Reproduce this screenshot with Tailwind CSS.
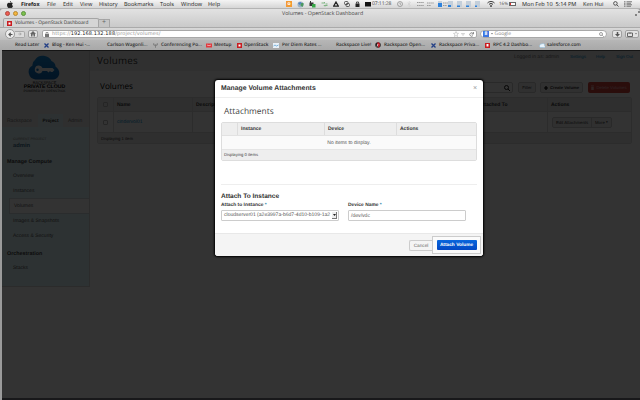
<!DOCTYPE html>
<html lang="en">
<head>
    <meta charset="UTF-8">
    <meta name="viewport" content="width=device-width, initial-scale=1.0">
    <title>Volumes - OpenStack Dashboard</title>
    <script src="https://cdn.jsdelivr.net/npm/@tailwindcss/browser@4"></script>
</head>
<body class="w-[640px] h-[400px] overflow-hidden bg-[#9b9b9b] font-['Liberation_Sans',sans-serif] whitespace-nowrap [text-rendering:geometricPrecision]">

    <!-- Menu bar -->
    <div class="h-[9px] flex items-center bg-linear-to-b from-[#f4f4f4] to-[#d6d6d6] border-b border-[#b4b4b4] text-[5.6px] leading-[8px] text-[#222] font-['Open_Sans',sans-serif]">
        <svg class="w-[6px] h-[7px] ml-[7px] mr-[8px] shrink-0" viewBox="0 0 12 14"><path fill="#222" d="M8 0c0 2-1 3-2.500 3C5.500 1.500 6.500.5 8 0zM6 4c1 0 2-.8 3-.8s2 .5 2.600 1.300C9.500 6 9.800 9 12 10c-.7 2-2 4-3.200 4S7 13.400 6 13.400 4.500 14 3.500 14C1.800 14 0 10.500 0 8s1.500-4.700 3.400-4.700C4.500 3.300 5.300 4 6 4z"/></svg>
        <span class="w-[26px] text-[5.300px] font-bold">Firefox</span>
        <span class="w-4">File</span>
        <span class="w-[17px]">Edit</span>
        <span class="w-[19px]">View</span>
        <span class="w-[25px]">History</span>
        <span class="w-9">Bookmarks</span>
        <span class="w-[21px]">Tools</span>
        <span class="w-[27px]">Window</span>
        <span class="w-[78px]">Help</span>
        <div class="flex items-center w-[86px] gap-[5px]">
            <span class="size-[6px] bg-[#f39a32] text-white text-[5px] leading-[6px] text-center font-bold">o</span>
            <svg class="size-[7px]" viewBox="0 0 14 14"><circle cx="7" cy="7" r="6" fill="#9bb2c4"/><path fill="#4c9960" d="M7 4h6v4l-2 4-4-3z"/><path fill="#4e82c4" d="M2 4l5-2 2 2-4 4z"/></svg>
            <svg class="size-[7px]" viewBox="0 0 14 14"><path fill="#333" d="M1 3h8v7H1z"/><path fill="#36a646" d="M6 6h7v7H6z"/><path fill="#333" d="M2 0h2v4H2z"/></svg>
            <svg class="size-[7px]" viewBox="0 0 14 14" fill="none" stroke="#7fb583" stroke-width="2"><path d="M1 4h7l-2-2M13 9H6l2 2M9 6h4"/></svg>
            <svg class="size-[6px]" viewBox="0 0 12 12" fill="none" stroke="#222" stroke-width="2.500"><path d="M6 2l4.500 8h-9z"/></svg>
            <svg class="size-[6px]" viewBox="0 0 12 12" fill="none" stroke="#333" stroke-width="1.500"><rect x="1" y="1" width="7" height="6" rx="2"/><rect x="4" y="5" width="7" height="6" rx="2"/></svg>
            <svg class="w-[5px] h-[6px]" viewBox="0 0 10 12"><path fill="#222" d="M1 5h8v7H1z"/><path d="M3 5V2h4v3" fill="none" stroke="#222" stroke-width="1.500"/></svg>
            <span class="w-[6px] h-[5px] bg-[#111] border-b border-[#777] shrink-0"></span>
        </div>
        <span class="w-[25px] text-[5.100px] tracking-[-0.100px] text-[#444]">07:11:28</span>
        <svg class="size-[6px] shrink-0" viewBox="0 0 12 12" fill="none" stroke="#777" stroke-width="1.200"><circle cx="6" cy="6" r="5"/><path d="M6 3v3l2 1"/></svg>
        <svg class="w-[4px] h-[6px] ml-1 shrink-0" viewBox="0 0 8 12" fill="none" stroke="#ccc" stroke-width="1"><path d="M1 3l6 6-3 2V1l3 2-6 6"/></svg>
        <!-- Load meters -->
        <svg class="w-[68px] h-[8px] ml-[6px] shrink-0" viewBox="0 0 68 8">
            <path d="M0 2.500h7M0 5.500h7M10 3h7M10 5.500h4M26 3h6M26 5.500h4" stroke="#999" stroke-width="1" stroke-dasharray="1.500 .6"/>
            <path fill="#c4cfda" d="M21 1h4v6h-4zM31 1h5v6h-5zM40 1h5v6h-5zM49 1h5v6h-5zM58 1h5v6h-5z"/>
            <path fill="#2d82dc" d="M21 3h4v4h-4zM31 5h3v2h-3zM40 5.500h3V7h-3zM49 5.500h3V7h-3zM58 5.500h2V7h-2z"/>
        </svg>
        <svg class="w-[8px] h-[6px] ml-[2px] shrink-0" viewBox="0 0 16 12" fill="none" stroke="#333" stroke-width="2"><path d="M1 4c4-4 10-4 14 0M4 7c2-2.500 6-2.500 8 0"/><circle cx="8" cy="10" r="1" fill="#333"/></svg>
        <span class="ml-[4px] w-[10px] text-[4.500px] text-[#555]">16%</span>
        <span class="w-[7px] h-[4px] border border-[#666] bg-white"><i class="block w-[1px] h-[2px] bg-[#d33]"></i></span>
        <span class="ml-[6px] w-[61px]">Mon Feb 10&nbsp; 5:14 PM</span>
        <span class="w-[30px]">Ken Hui</span>
        <svg class="size-[6px]" viewBox="0 0 12 12" fill="none" stroke="#333" stroke-width="1.600"><circle cx="4.800" cy="4.800" r="3.600"/><path d="M7.500 7.500L11 11"/></svg>
        <svg class="w-[8px] h-[6px] ml-[5px]" viewBox="0 0 16 12" stroke="#555" stroke-width="1.500"><path d="M0 1.500h3M5 1.500h11M0 4.500h3M5 4.500h9M0 7.500h3M5 7.500h11M0 10.500h3M5 10.500h9"/></svg>
    </div>

    <!-- Browser chrome -->
    <div class="relative h-[41px] bg-linear-to-b from-[#e2e2e2] to-[#ababab] rounded-t-[3px] font-['Open_Sans',sans-serif] text-[#333]">
        <div class="h-[8px] flex items-center pl-[5px] gap-[3px]">
            <span class="size-[5px] rounded-full bg-[#ee5b50] border-[0.5px] border-[#b04a42]"></span>
            <span class="size-[5px] rounded-full bg-[#f3b53c] border-[0.5px] border-[#b88a35]"></span>
            <span class="size-[5px] rounded-full bg-[#7cc04c] border-[0.5px] border-[#5c9340]"></span>
            <span class="ml-[253px] text-[5.300px] leading-[8px] text-[#444]">Volumes - OpenStack Dashboard</span>
            <svg class="size-[5px] ml-auto" viewBox="0 0 10 10" fill="none" stroke="#666" stroke-width="1.500"><path d="M6 1h3v3M9 1L6 4M4 9H1V6M1 9l3-3"/></svg>
        </div>
        <div class="h-[10px] flex items-end">
            <div class="ml-[3px] w-[96px] h-[9px] flex items-center rounded-t-[2px] bg-[#d5d5d5] border-x border-t border-[#a5a5a5]">
                <svg class="size-[5px] ml-[3px]" viewBox="0 0 10 10"><path fill="#c91c20" d="M0 0h10v10H0z"/><path fill="#fff" d="M3 3h4v4H3z"/></svg>
                <span class="ml-[3px] text-[4.800px] leading-[7px]">Volumes - OpenStack Dashboard</span>
            </div>
            <span class="w-[11px] h-[8px] border border-l-0 border-b-0 border-[#a5a5a5] bg-[#c6c6c6] text-center text-[7px] leading-[6px] text-[#666]">+</span>
        </div>
        <div class="h-[13px] flex items-center bg-linear-to-b from-[#d8d8d8] to-[#bdbdbd] border-t border-[#aaa]">
            <span class="ml-[5px] size-[10px] rounded-full bg-[#eee] border border-[#9a9a9a] flex items-center justify-center"><svg class="size-[5px]" viewBox="0 0 10 10"><path d="M9 5H3M5.500 1.500L2 5l3.500 3.500" stroke="#555" stroke-width="2.400" fill="none"/></svg></span>
            <span class="w-[10px] h-[7px] rounded-r-[2px] bg-[#dcdcdc] border border-l-0 border-[#a9a9a9] flex items-center justify-center"><svg class="size-[4px]" viewBox="0 0 10 10"><path d="M1 5h6M5 1.500L8 5 5 8.500" stroke="#999" stroke-width="2" fill="none"/></svg></span>
            <span class="ml-[3px] w-[10px] h-[8px] rounded-[2px] bg-[#e2e2e2] border border-[#a0a0a0] flex items-center justify-center"><svg class="size-[6px]" viewBox="0 0 12 12"><path fill="#666" d="M6 0l6 6h-2v5H7V7H5v4H2V6H0z"/></svg></span>
            <div class="ml-[4px] w-[435px] h-[8px] rounded-[2px] bg-white border border-[#a8a8a8] flex items-center text-[5px] leading-[7px] font-['DejaVu_Sans',sans-serif]">
                <svg class="ml-[2px] w-[4px] h-[5px]" viewBox="0 0 8 10"><path fill="#777" d="M0 4h8v6H0z"/><path d="M2 4V1h4v3" fill="none" stroke="#777" stroke-width="1.400"/></svg>
                <span class="ml-[3px] mt-[1px] tracking-[0.100px] text-[#999]">https://<b class="font-normal text-[#222]">192.168.132.188</b>/project/volumes/</span>
                <span class="ml-auto mr-[2px] flex items-center gap-[2px]">
                    <svg class="size-[6px]" viewBox="0 0 12 12" fill="none" stroke="#aaa"><path d="M6 1l1.500 3.500 3.500.3-2.700 2.400.8 3.800L6 9l-3.100 2 .8-3.800L1 4.800l3.500-.3z"/></svg>
                    <svg class="w-[4px] h-[3px]" viewBox="0 0 8 6"><path fill="none" stroke="#aaa" d="M1 1h6L4 5z"/></svg>
                    <svg class="size-[5px] ml-[2px]" viewBox="0 0 10 10" fill="none" stroke="#777" stroke-width="1.600"><path d="M8 7a3.500 3.500 0 1 1 0-4M9 0v4H5"/></svg>
                </span>
            </div>
            <div class="ml-[3px] w-[127px] h-[8px] rounded-[4px] bg-white border border-[#a8a8a8] flex items-center">
                <span class="ml-[2px] size-[6px] bg-[#3d76e0] text-white text-[5px] leading-[6px] text-center font-bold">8</span>
                <svg class="ml-[1.500px] w-[2px] h-[2px]" viewBox="0 0 4 4"><path fill="#777" d="M0 0h4L2 3z"/></svg>
                <span class="ml-[2px] mt-[1px] text-[5px] leading-[7px] text-[#888]">Google</span>
                <svg class="ml-auto mr-[2px] size-[5px]" viewBox="0 0 10 10" fill="none" stroke="#777" stroke-width="1.400"><circle cx="4" cy="4" r="3"/><path d="M6.500 6.500L9.500 9.500"/></svg>
            </div>
            <span class="ml-[5px] w-[10px] h-[8px] rounded-[2px] bg-[#e2e2e2] border border-[#a0a0a0] flex items-center justify-center"><svg class="size-[5px]" viewBox="0 0 10 10"><path fill="#555" d="M3.500 0h3v4H10L5 9.500 0 4h3.500z"/></svg></span>
            <span class="ml-[3px] w-[14px] h-[8px] rounded-[2px] bg-[#e2e2e2] border border-[#a0a0a0] flex items-center justify-center gap-[2px]"><svg class="w-[6px] h-[5px]" viewBox="0 0 12 10"><path fill="none" stroke="#666" stroke-width="2" d="M1 2h10v7H1zM6 1v3"/></svg><svg class="w-[2px] h-[2px]" viewBox="0 0 4 4"><path fill="#777" d="M0 0h4L2 3z"/></svg></span>
        </div>
        <!-- Bookmarks -->
        <div class="h-[10px] flex items-center bg-linear-to-b from-[#b6b6b6] to-[#a8a8a8] text-[4.700px] font-semibold leading-[8px] text-[#2c2c2c]">
            <span class="ml-[15px] w-[29px]">Read Later</span>
            <svg class="size-[5px]" viewBox="0 0 10 10"><path d="M1 1l8 8M9 1L1 9" stroke="#233f86" stroke-width="2.600"/></svg>
            <span class="ml-[3px] w-[49px]">Blog - Ken Hui -...</span>
            <span class="ml-[6px] w-[46px]">Carlson Wagonli...</span>
            <svg class="size-[5px]" viewBox="0 0 10 10" fill="none" stroke="#666"><path d="M1 1l4 3 4-3v3L5 6 1 4zM5 3v7"/></svg>
            <span class="ml-[3px] w-[45px]">Conferencing Po...</span>
            <svg class="w-[6px] h-[5px]" viewBox="0 0 12 10"><path fill="#e0393e" d="M0 1h12v8H0z"/><path d="M2 5l2-1 2 2 2-2 2 1" stroke="#fff" fill="none"/></svg>
            <span class="ml-[2px] w-[23px]">Meetup</span>
            <svg class="size-[5px]" viewBox="0 0 10 10"><path fill="#c91c20" d="M0 0h10v10H0z"/><path fill="#fff" d="M3 3h4v4H3z"/></svg>
            <span class="ml-[2px] w-[29px]">OpenStack</span>
            <svg class="w-[6px] h-[5px]" viewBox="0 0 12 10"><path fill="#e8f0f8" d="M0 0h12v10H0z"/><path d="M1 6l3-2 3 2 4-2" stroke="#58a0d4" fill="none" stroke-width="1.500"/></svg>
            <span class="ml-[3px] w-[54px]">Per Diem Rates ...</span>
            <span class="w-[39px]">Rackspace Live!</span>
            <svg class="w-[6px] h-[6px]" viewBox="0 0 12 12"><circle cx="6" cy="6" r="5.500" fill="#222"/><path d="M6 0c5 2 6 8 1 12-1-5-5-6-1-12z" fill="#c41f2b"/><path d="M6 4l-2 5" stroke="#fff" stroke-width="1.500"/></svg>
            <span class="ml-[3px] w-[47px]">Rackspace Open...</span>
            <svg class="size-[5px]" viewBox="0 0 10 10"><path d="M1 1l8 8M9 1L1 9" stroke="#233f86" stroke-width="2.600"/></svg>
            <span class="ml-[3px] w-[46px]">Rackspace Priva...</span>
            <svg class="size-[5px]" viewBox="0 0 10 10"><path fill="#c91c20" d="M0 0h10v10H0z"/><path fill="#fff" d="M3 2h4v5H3z"/></svg>
            <span class="ml-[3px] w-[46px]">RPC 4.2 Dashbo...</span>
            <svg class="w-[6px] h-[5px]" viewBox="0 0 12 10"><path fill="#e9f3fa" stroke="#85b9da" d="M3 9a3 3 0 0 1-1-5 3 3 0 0 1 4-2 3 3 0 0 1 5 3 2 2 0 0 1-2 4z"/></svg>
            <span class="ml-[2px]">salesforce.com</span>
        </div>
    </div>

    <!-- Dashboard page, dimmed by the modal backdrop -->
    <div class="relative ml-[2px] h-[350px] bg-white">
        <div class="flex h-[348px]">
            <aside class="w-[88px] h-[237px] bg-[#e8e8e8] border-r border-b border-[#d4d4d4]">
                <div class="h-[64px] flex flex-col items-center pt-[5px]">
                    <svg class="w-[32px] h-[25px] -ml-[3px]" viewBox="0 0 64 50">
                        <defs><linearGradient id="cloud" x1="0" y1="0" x2="0" y2="1"><stop offset="0" stop-color="#1389d8"/><stop offset="1" stop-color="#0a65b4"/></linearGradient></defs>
                        <path fill="url(#cloud)" d="M15 49A15 15 0 0 1 9 21 12 12 0 0 1 14 10C18 2 26 0 34 2c6 1 11 5 13 10 5 2 8 6 8 11 12 8 9 24-4 26z"/>
                        <path fill="#fff" fill-rule="evenodd" d="M22 21a8 8 0 0 1 7 5h20l4 4-4 4h-3l-2-2-3 3-3-3h-9a8 8 0 1 1-7-11zm-3 6a2.500 2.500 0 1 0 0 5 2.500 2.500 0 0 0 0-5z"/>
                    </svg>
                    <span class="mt-[1px] text-[3.900px] leading-[4px] text-[#222] -ml-[2px]">RACKSPACE</span>
                    <span class="text-[5.200px] leading-[5px] font-bold text-black -ml-[2px]">PRIVATE CLOUD</span>
                    <span class="text-[3.200px] leading-[3px] text-[#222] -ml-[2px]">POWERED BY OPENSTACK</span>
                </div>
                <div class="h-[13px] flex text-[5px] leading-[14px] text-[#777]">
                    <span class="w-[36px] pl-[5px]">Rackspace</span>
                    <span class="w-[25px] bg-[#e1f6fa] text-center font-bold text-[4.700px] text-[#333]">Project</span>
                    <span class="pl-[5px]">Admin</span>
                </div>
                <div class="h-[159px] pt-[10px] bg-[#e1f8fc] text-[5px] text-[#555]">
                    <div class="pl-[11px] text-[3.400px] leading-[5px] text-[#888]">CURRENT PROJECT</div>
                    <div class="pl-[11px] text-[5.800px] leading-[8px] font-bold text-[#3c6c8c]">admin</div>
                    <div class="mt-[6px] pl-[5px] text-[5.400px] leading-[12px] font-bold text-[#444]">Manage Compute</div>
                    <div class="pl-[11px] leading-[15px] mt-[1px]">Overview</div>
                    <div class="pl-[11px] leading-[14px]">Instances</div>
                    <div class="ml-[7px] h-[16px] pl-[4px] leading-[15px] bg-white border border-r-0 border-[#d0dcdf]">Volumes</div>
                    <div class="pl-[11px] leading-[15px]">Images &amp; Snapshots</div>
                    <div class="pl-[11px] leading-[14px]">Access &amp; Security</div>
                    <div class="mt-[6px] pl-[5px] text-[5.400px] leading-[10px] font-bold text-[#444]">Orchestration</div>
                    <div class="pl-[11px] mt-[2px] leading-[15px]">Stacks</div>
                </div>
            </aside>
            <main class="flex-1">
                <div class="h-[21px] flex items-center justify-between bg-[#efefef] pl-[7px] pr-[7px]">
                    <span class="pt-[1px] font-['Open_Sans',sans-serif] text-[9.800px] tracking-[0.200px] text-[#333]">Volumes</span>
                    <div class="flex text-[4.400px] leading-[8px] pb-[7px] text-[#0088cc]">
                        <span class="w-[56px] text-[5px] text-[#777]">Logged in as: admin</span><span class="w-[26px]">Settings</span><span class="w-[20px]">Help</span><span class="w-[17px]">Sign Out</span>
                    </div>
                </div>
                <div class="h-[25px] flex items-end justify-between pl-[10px] pr-[10px] pb-[3px]">
                    <span class="font-['Open_Sans',sans-serif] text-[8.200px] leading-[13px] text-black">Volumes</span>
                    <div class="flex items-center text-[4.300px] leading-[9px] text-[#333]">
                        <span class="w-[60px] h-[11px] flex items-center justify-end border border-[#ccc] rounded-[2px] mr-[5px] pr-[2px]"><svg class="size-[6px]" viewBox="0 0 12 12" fill="none" stroke="#222" stroke-width="2"><circle cx="5" cy="5" r="4"/><path d="M8 8l4 4"/></svg></span>
                        <span class="w-[18px] h-[11px] text-center border border-[#ccc] rounded-[2px] bg-[#f0f0f0] mr-[4px]">Filter</span>
                        <span class="w-[43px] h-[11px] flex items-center justify-center gap-[2px] border border-[#ccc] rounded-[2px] bg-[#f0f0f0] mr-[5px] font-bold text-[4.200px]"><svg class="size-[4px]" viewBox="0 0 8 8"><path d="M4 0v8M0 4h8" stroke="#000" stroke-width="2.400"/></svg>Create Volume</span>
                        <span class="w-[42px] h-[11px] flex items-center justify-center gap-[2px] rounded-[2px] bg-[#d0403a] text-white/60 text-[4.300px]"><svg class="w-[3px] h-[5px]" viewBox="0 0 6 10"><path fill="#fff" fill-opacity=".6" d="M0 1h6v1H0zM.5 3h5v7h-5z"/></svg>Delete Volumes</span>
                    </div>
                </div>
                <div class="ml-[7px] mr-[8px] mt-[1px] h-[47px] border border-[#ddd] rounded-[2px] text-[5px] text-[#333]">
                    <div class="h-[14px] leading-[15px] flex bg-[#e9e9e9] border-b border-[#ddd] font-bold">
                        <span class="w-[16px] h-full flex items-center justify-center border-r border-[#ddd]"><i class="size-[5px] rounded-[1px] border border-[#bbb]"></i></span>
                        <span class="w-[79px] pl-[3px] border-r border-[#ddd]">Name</span>
                        <span class="w-[266px] pl-[3px]">Description</span>
                        <span class="w-[89px] pl-[20px] border-r border-[#ddd]">Attached To</span>
                        <span class="pl-[3px]">Actions</span>
                    </div>
                    <div class="h-[20px] leading-[20px] flex items-center">
                        <span class="w-[16px] h-full flex items-center justify-center border-r border-[#ddd]"><i class="size-[5px] rounded-[1px] border border-[#bbb]"></i></span>
                        <span class="w-[79px] h-full pl-[3px] border-r border-[#ddd] text-[#0088cc]">cindervol01</span>
                        <span class="w-[355px] h-full border-r border-[#ddd]"></span>
                        <span class="ml-[4px] w-[60px] h-[11px] flex border border-[#ccc] rounded-[2px] bg-[#f0f0f0] text-[4.300px] leading-[9px]">
                            <span class="w-[39px] text-center border-r border-[#ccc]">Edit Attachments</span><span class="pl-[3px]">More <i class="not-italic text-[3.500px] align-top">▾</i></span>
                        </span>
                    </div>
                    <div class="h-[11px] pl-[3px] leading-[11px] bg-[#e9e9e9] border-t border-[#ddd] text-[4.200px]">Displaying 1 item</div>
                </div>
            </main>
        </div>
        <div class="absolute inset-0 bg-black/80"></div>
        <div class="absolute inset-x-0 top-0 h-px bg-[#151515]"></div>
        <div class="absolute inset-x-0 bottom-0 h-[2px] bg-[#18181a]"></div>
    </div>

    <!-- Manage attachments modal -->
    <div class="absolute left-[215px] top-[80px] w-[268px] h-[176px] flex flex-col bg-white rounded-[3px] shadow-[0_0_2px_1px_#000] overflow-hidden text-[#333]">
        <div class="h-[18px] flex items-center justify-between pt-[1px] pl-[6px] pr-[6px] border-b border-[#eee]">
            <span class="text-[6.850px] font-bold">Manage Volume Attachments</span>
            <span class="text-[7px] text-[#999]">×</span>
        </div>
        <div class="flex-1 px-[6px] pt-[6px]">
            <div class="pl-[3px] h-[18px] leading-[15px] font-['Open_Sans',sans-serif] text-[8.400px] text-[#444]">Attachments</div>
            <div class="h-[39px] border border-[#ddd] rounded-[2px] text-[5px]">
                <div class="h-[13px] leading-[13px] flex bg-[#eee] border-b border-[#e2e2e2] font-bold">
                    <span class="w-[16px] border-r border-[#ddd]"></span>
                    <span class="w-[87px] pl-[3px] border-r border-[#ddd]">Instance</span>
                    <span class="w-[72px] pl-[3px] border-r border-[#ddd]">Device</span>
                    <span class="pl-[3px]">Actions</span>
                </div>
                <div class="h-[13px] leading-[14px] text-center text-[#555] bg-[#fafafa]">No items to display.</div>
                <div class="h-[11px] leading-[10px] pl-[2px] text-[4.200px] text-[#444] bg-[#eee] border-t border-[#e5e5e5]">Displaying 0 items</div>
            </div>
            <div class="mt-[23px] border-t border-[#eee]"></div>
            <div class="mt-[7px] text-[6.550px] leading-[10px] font-bold text-[#333]">Attach To Instance</div>
            <div class="flex text-[4.900px] leading-[7px] font-bold">
                <div class="w-[127px]">
                    <div>Attach to Instance <span class="text-[#3a87ad]">*</span></div>
                    <div class="mt-[1px] w-[118px] h-[11px] flex items-center border border-[#ccc] rounded-[1px] pl-[2px] pr-[1px] font-normal text-[5.050px] text-[#555]">
                        <span class="w-[108px]">cloudserver01 (a2e3997a-b6d7-4d10-b109-1a2</span>
                        <span class="w-[5px] h-[7px] flex items-center justify-center bg-[#eee] border-r border-b border-[#777]"><svg class="w-[3px] h-[2px]" viewBox="0 0 6 4"><path fill="#222" d="M0 0h6L3 4z"/></svg></span>
                    </div>
                </div>
                <div>
                    <div>Device Name <span class="text-[#3a87ad]">*</span></div>
                    <div class="mt-[1px] w-[118px] h-[11px] border border-[#ccc] rounded-[1px] pl-[2px] leading-[11px] font-normal text-[5.100px] text-[#555]">/dev/vdc</div>
                </div>
            </div>
        </div>
        <div class="h-[23px] flex items-center justify-end pr-[2px] bg-[#f4f4f4] border-t border-[#e8e8e8]">
            <span class="w-[23px] h-[11px] text-center border border-r-0 border-[#ccc] rounded-l-[2px] text-[4.700px] leading-[10px] text-[#666]">Cancel</span>
            <div class="w-[49px] h-[18px] flex items-center justify-center border border-[#ccc] bg-[#fbfbfb] -mt-[1px]">
                <span class="w-[40px] h-[10px] text-center rounded-[1px] bg-linear-to-b from-[#0a66dc] to-[#0448c4] text-white font-bold text-[4.800px] leading-[11px]">Attach Volume</span>
            </div>
        </div>
    </div>

</body>
</html>
